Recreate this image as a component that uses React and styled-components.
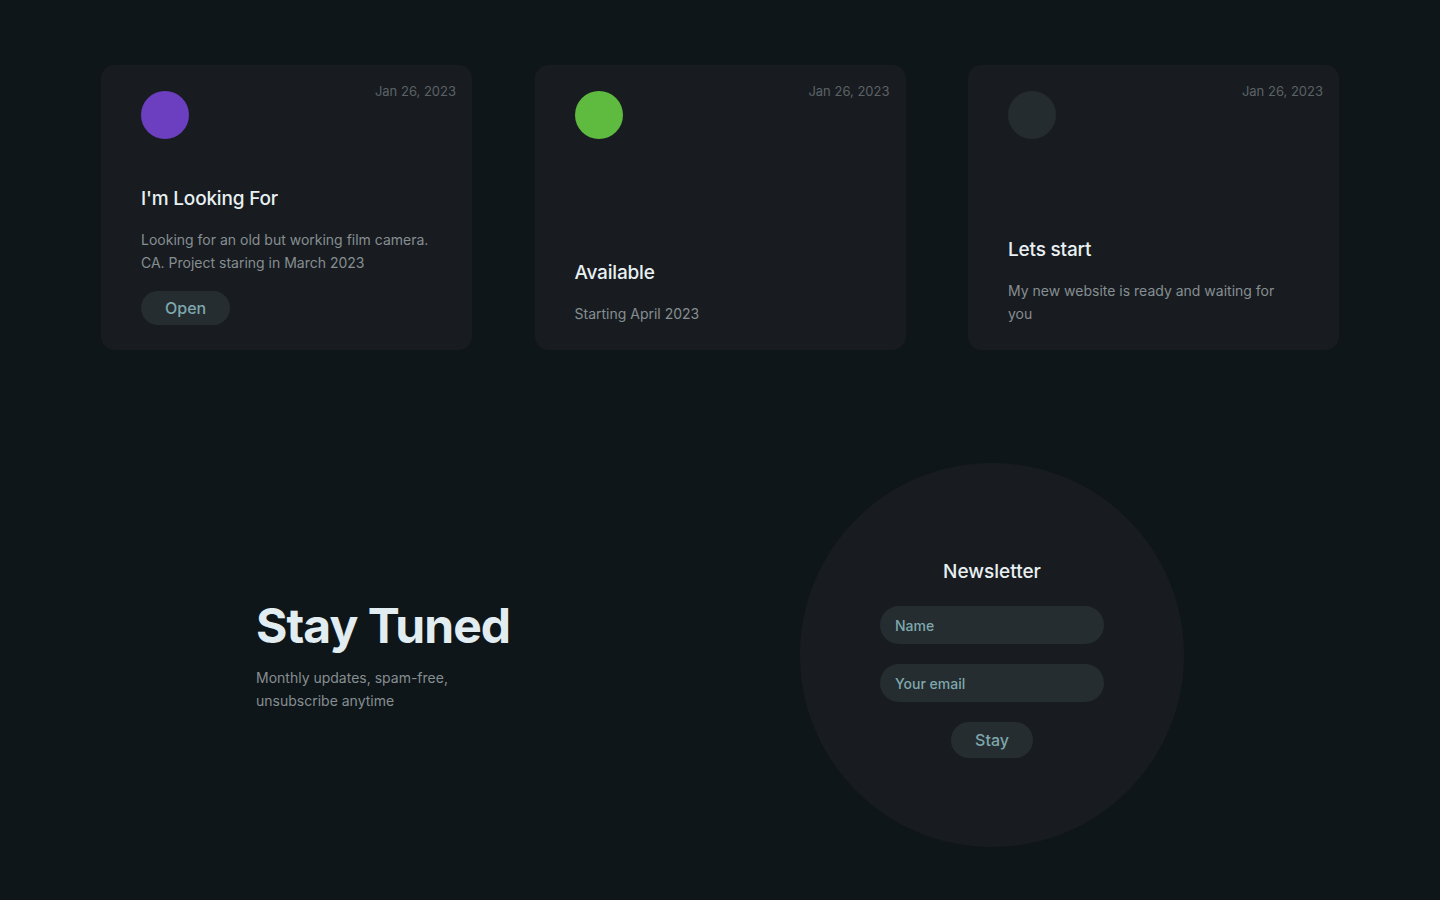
import styled, { createGlobalStyle } from "styled-components";

const GlobalStyle = createGlobalStyle`
    * { box-sizing: border-box; }
    body {
        margin: 0;
        background: #0f1619;
        font-family: 'Inter', 'Liberation Sans', sans-serif;
    }
`

const cards = [
    { color: "#6b3fbf", title: "I'm Looking For", text: "Looking for an old but working film camera. CA. Project staring in March 2023", button: "Open" },
    { color: "#5fbb3f", title: "Available", text: "Starting April 2023" },
    { color: "#252c2f", title: "Lets start", text: "My new website is ready and waiting for you" },
]

export default function App() {
    return (
        <>
            <GlobalStyle />
            <Page>
                <Cards>
                    {cards.map((c) => (
                        <Card key={c.title}>
                            <Date>Jan 26, 2023</Date>
                            <Dot cor={c.color} />
                            <CardBody>
                                <Title>{c.title}</Title>
                                <Text>{c.text}</Text>
                                {c.button && <Pill>{c.button}</Pill>}
                            </CardBody>
                        </Card>
                    ))}
                </Cards>

                <Newsletter>
                    <Intro>
                        <h1>Stay Tuned</h1>
                        <p>Monthly updates, spam-free,<br />unsubscribe anytime</p>
                    </Intro>
                    <Circle>
                        <h2>Newsletter</h2>
                        <Input placeholder="Name" />
                        <Input placeholder="Your email" />
                        <Pill tall>Stay</Pill>
                    </Circle>
                </Newsletter>
            </Page>
        </>
    )
}

const Page = styled.div`
    width: 1238px;
    margin: 0 auto;
    padding-top: 65px;
    min-height: 900px;
`

const Cards = styled.div`
    display: grid;
    grid-template-columns: repeat(3, 371px);
    justify-content: space-between;
`

const Card = styled.div`
    position: relative;
    height: 285px;
    background: #181c20;
    border-radius: 14px;
    padding: 26px 40px 25px 40px;
    display: flex;
    flex-direction: column;
    justify-content: space-between;
`

const Date = styled.span`
    position: absolute;
    top: 18px;
    right: 16px;
    font-size: 13px;
    line-height: 16px;
    color: #5b6266;
`

const Dot = styled.div`
    width: 48px;
    height: 48px;
    border-radius: 50%;
    background: ${props => props.cor};
`

const CardBody = styled.div`
    display: flex;
    flex-direction: column;
    align-items: flex-start;
    gap: 17px;
`

const Title = styled.h3`
    margin: 0;
    font-size: 19px;
    line-height: 24px;
    font-weight: 500;
    letter-spacing: -0.01em;
    color: #e8f0f3;
`

const Text = styled.p`
    margin: 0;
    font-size: 14px;
    line-height: 23px;
    color: #868e92;
    max-width: 290px;
`

const Pill = styled.button`
    height: ${props => props.tall ? "36px" : "34px"};
    padding: 0 24px;
    border: none;
    border-radius: 18px;
    background: #252d30;
    color: #7fa7ae;
    font-family: 'Inter', 'Liberation Sans', sans-serif;
    font-size: 16px;
    font-weight: 500;
`

const Newsletter = styled.div`
    margin-top: 113px;
    padding: 0 155px;
    display: flex;
    justify-content: space-between;
    align-items: center;
`

const Intro = styled.div`
    h1 {
        margin: 0;
        font-size: 48px;
        line-height: 56px;
        font-weight: 700;
        letter-spacing: -0.02em;
        color: #e1edf1;
    }
    p {
        margin: 12px 0 0 0;
        font-size: 14px;
        line-height: 23px;
        color: #868e92;
    }
`

const Circle = styled.div`
    width: 384px;
    height: 384px;
    border-radius: 50%;
    background: #181c20;
    display: flex;
    flex-direction: column;
    align-items: center;
    justify-content: center;
    gap: 20px;
    padding-top: 8px;

    h2 {
        margin: 0 0 2px 0;
        font-size: 19px;
        line-height: 24px;
        font-weight: 500;
        color: #e8f0f3;
    }
`

const Input = styled.input`
    width: 224px;
    height: 38px;
    border: none;
    border-radius: 19px;
    background: #252d30;
    padding: 0 15px;
    font-family: 'Inter', 'Liberation Sans', sans-serif;
    font-size: 14px;
    font-weight: 500;
    color: #7fa7ae;
    outline: none;

    &::placeholder {
        color: #7fa7ae;
    }
`
